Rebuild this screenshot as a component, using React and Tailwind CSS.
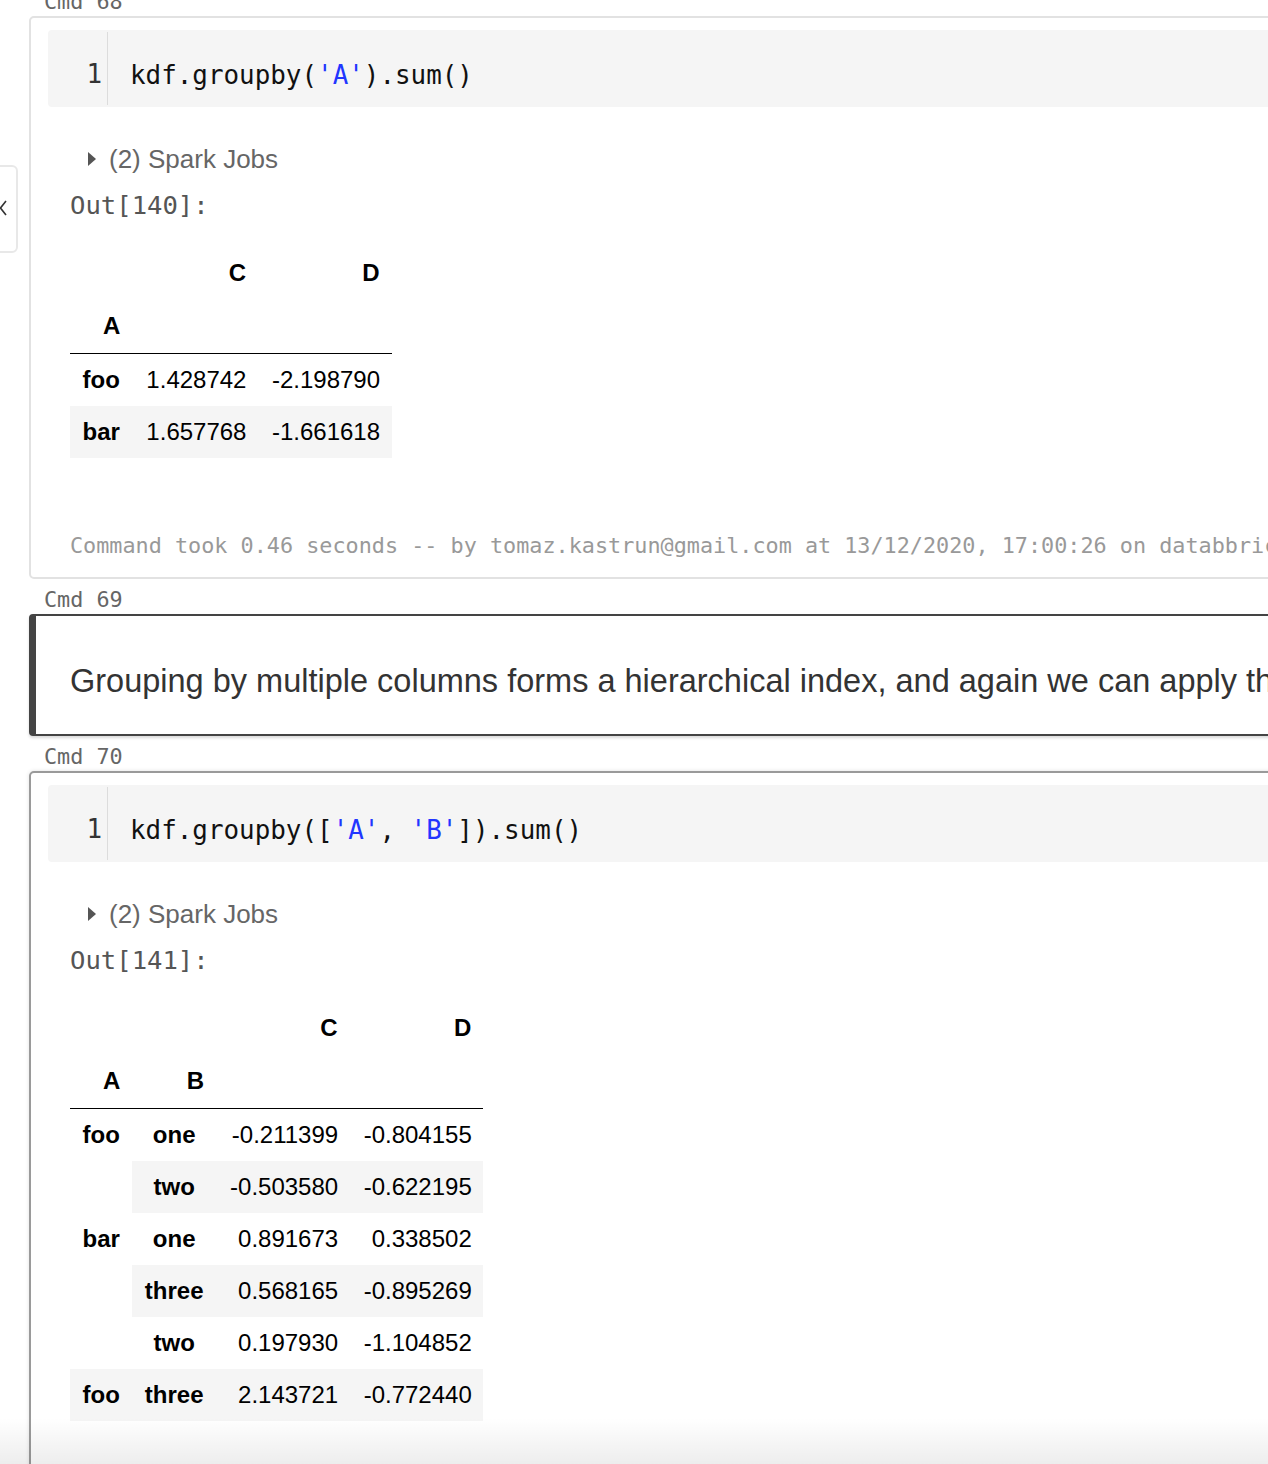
import React from 'react';

const mono = "font-['DejaVu_Sans_Mono',monospace]";
const sans = "font-['Liberation_Sans',Arial,sans-serif]";

function CmdLabel({ n, first }) {
    return (
        <div className={`${first ? '-mt-[19px]' : ''} h-[35px] pt-[7px] pl-[15px] flex items-center ${mono} text-[21.8px] text-[#666]`}>
            Cmd {n}
        </div>
    );
}

function Str({ children }) {
    return <span className="text-[#2236ff]">{children}</span>;
}

function SparkJobs() {
    return (
        <div className={`mt-[33px] h-[38px] flex items-center pl-[18px] ${sans} text-[26px] text-[#666]`}>
            <svg width="8" height="14" viewBox="0 0 8 14" className="mr-[13px]">
                <path d="M0 0 L8 7 L0 14 Z" fill="#555" />
            </svg>
            (2) Spark Jobs
        </div>
    );
}

const th = 'pl-[14px] pr-[12px] h-[52px] leading-[52px] align-top font-bold text-right';
const th2 = 'pl-[14px] pr-[12px] h-[54px] leading-[54px] align-top font-bold text-right border-b border-black';
const thBody = 'px-[12.5px] h-[52px] leading-[52px] align-top font-bold text-center';
const td = 'pl-[14px] pr-[11.5px] h-[52px] leading-[52px] align-top text-right';

function Table1() {
    const rows = [
        ['foo', '1.428742', '-2.198790'],
        ['bar', '1.657768', '-1.661618'],
    ];
    return (
        <table className={`${sans} text-[24px] text-black`}>
            <thead>
                <tr>
                    <th className={th}></th>
                    <th className={th}>C</th>
                    <th className={th}>D</th>
                </tr>
                <tr>
                    <th className={th2}>A</th>
                    <th className={th2}></th>
                    <th className={th2}></th>
                </tr>
            </thead>
            <tbody>
                {rows.map((r, i) => (
                    <tr key={i} className={i % 2 === 1 ? 'bg-[#f5f5f5]' : ''}>
                        <th className={thBody}>{r[0]}</th>
                        <td className={td}>{r[1]}</td>
                        <td className={td}>{r[2]}</td>
                    </tr>
                ))}
            </tbody>
        </table>
    );
}

function Table2() {
    return (
        <table className={`${sans} text-[24px] text-black`}>
            <thead>
                <tr>
                    <th className={th}></th>
                    <th className={th}></th>
                    <th className={th}>C</th>
                    <th className={th}>D</th>
                </tr>
                <tr>
                    <th className={th2}>A</th>
                    <th className={th2}>B</th>
                    <th className={th2}></th>
                    <th className={th2}></th>
                </tr>
            </thead>
            <tbody>
                <tr>
                    <th rowSpan={2} className={thBody}>foo</th>
                    <th className={thBody}>one</th>
                    <td className={td}>-0.211399</td>
                    <td className={td}>-0.804155</td>
                </tr>
                <tr className="bg-[#f5f5f5]">
                    <th className={thBody}>two</th>
                    <td className={td}>-0.503580</td>
                    <td className={td}>-0.622195</td>
                </tr>
                <tr>
                    <th rowSpan={3} className={thBody}>bar</th>
                    <th className={thBody}>one</th>
                    <td className={td}>0.891673</td>
                    <td className={td}>0.338502</td>
                </tr>
                <tr className="bg-[#f5f5f5]">
                    <th className={thBody}>three</th>
                    <td className={td}>0.568165</td>
                    <td className={td}>-0.895269</td>
                </tr>
                <tr>
                    <th className={thBody}>two</th>
                    <td className={td}>0.197930</td>
                    <td className={td}>-1.104852</td>
                </tr>
                <tr className="bg-[#f5f5f5]">
                    <th className={thBody}>foo</th>
                    <th className={thBody}>three</th>
                    <td className={td}>2.143721</td>
                    <td className={td}>-0.772440</td>
                </tr>
            </tbody>
        </table>
    );
}

function CodeCell({ borderClass, code, out, table, footer }) {
    return (
        <div className={`w-[1400px] rounded-[5px] border-2 ${borderClass} px-[17px] pt-[12px] ${footer ? 'pb-[16px]' : 'pb-[80px]'}`}>
            <div className={`h-[77px] bg-[#f5f5f5] rounded-[4px] flex ${mono} text-[25.9px]`}>
                <div className="w-[60px] my-[2px] border-r border-[#dcdcdc] flex items-center justify-end pr-[5px] pt-[11px] text-[#333]">
                    1
                </div>
                <div className="pl-[22px] flex items-center pt-[13px] whitespace-pre text-[#111]">{code}</div>
            </div>
            <div className="pl-[22px]">
                <SparkJobs />
                <div className={`mt-[9px] leading-[36px] ${mono} text-[25.6px] text-[#555]`}>{out}</div>
                <div className="mt-[24px]">{table}</div>
                {footer && (
                    <div className={`mt-[73px] leading-[30px] whitespace-nowrap ${mono} text-[21.8px] text-[#999]`}>
                        Command took 0.46 seconds -- by tomaz.kastrun@gmail.com at 13/12/2020, 17:00:26 on databbricks
                    </div>
                )}
            </div>
        </div>
    );
}

export default function App() {
    return (
        <div className="relative h-[1464px] w-[1268px] overflow-hidden bg-white">
            <div className="pl-[29px]">
                <CmdLabel n={68} first />
                <CodeCell
                    borderClass="border-[#e2e2e2]"
                    code={<>kdf.groupby(<Str>'A'</Str>).sum()</>}
                    out="Out[140]:"
                    table={<Table1 />}
                    footer
                />
                <CmdLabel n={69} />
                <div className="w-[1400px] h-[122px] rounded-[4px] border-y-2 border-r-2 border-l-[7px] border-[#444] shadow-[0_2px_3px_rgba(0,0,0,0.15)] flex items-center pl-[34px] pt-[12px]">
                    <span className={`${sans} text-[32.5px] text-[#333] whitespace-nowrap`}>
                        Grouping by multiple columns forms a hierarchical index, and again we can apply the sum function.
                    </span>
                </div>
                <CmdLabel n={70} />
                <div className="shadow-[0_0_4px_rgba(0,0,0,0.12)] w-[1400px] rounded-[5px]">
                    <CodeCell
                        borderClass="border-[#9a9a9a]"
                        code={<>kdf.groupby([<Str>'A'</Str>{', '}<Str>'B'</Str>]).sum()</>}
                        out="Out[141]:"
                        table={<Table2 />}
                    />
                </div>
            </div>

            {/* collapsed side panel */}
            <div className="absolute left-[-12px] top-[165px] w-[30px] h-[88px] border-2 border-[#e8e8e8] rounded-[6px] bg-white">
                <svg width="8" height="16" viewBox="0 0 8 16" className="absolute left-[9px] top-[33px]">
                    <path d="M7 1 L1.5 8 L7 15" fill="none" stroke="#333" strokeWidth="1.6" />
                </svg>
            </div>

            <div className="pointer-events-none absolute bottom-0 left-0 right-0 h-[46px] bg-linear-to-b from-transparent to-black/[0.07]" />
        </div>
    );
}
